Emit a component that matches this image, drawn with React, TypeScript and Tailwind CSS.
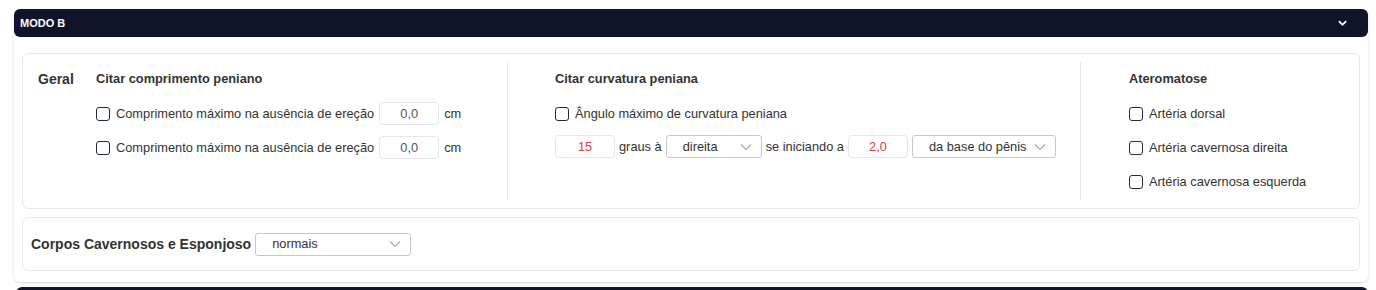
import React from 'react';

function Check({ label }: { label: string }) {
  return (
    <label className="flex items-center gap-[6px] text-[12.8px] leading-[17px] text-[#333]">
      <span className="w-[14px] h-[14px] rounded-[3px] border border-[#1f2a44] bg-white shrink-0" />
      <span>{label}</span>
    </label>
  );
}

function Chevron({ className }: { className?: string }) {
  return (
    <svg viewBox="0 0 12 8" className={className} fill="none" stroke="currentColor" strokeWidth="1.2">
      <path d="M1 1.5 6 6.5 11 1.5" />
    </svg>
  );
}

function NumInput({ value, red }: { value: string; red?: boolean }) {
  return (
    <div
      className={`w-[60px] h-[23px] rounded-[4px] border border-[#e3e6ea] flex items-center justify-center text-[12.8px] ${
        red ? 'text-[#e53935]' : 'text-[#555]'
      }`}
    >
      {value}
    </div>
  );
}

function Select({ value, width }: { value: string; width: string }) {
  return (
    <div className={`${width} h-[23px] rounded-[3px] border border-[#c8c8c8] flex items-center justify-between pl-4 pr-[9px] text-[12.8px] text-[#333]`}>
      <span>{value}</span>
      <Chevron className="w-[12px] h-[8px] text-[#aaa]" />
    </div>
  );
}

export default function App() {
  return (
    <div className="min-h-screen bg-white pt-[9px] font-['Liberation_Sans',Arial,sans-serif] text-[#333]">
      <div className="ml-[14px] mr-[8px] rounded-[6px] bg-white shadow-[0_1px_3px_rgba(0,0,0,0.15)] pb-[11px]">
        <div className="h-[28px] rounded-[6px] bg-[#11132b] flex items-center justify-between pl-[6px] pr-[21px]">
          <span className="text-[11px] font-bold text-white">MODO B</span>
          <svg viewBox="0 0 10 6" className="w-[9px] h-[6px] text-white" fill="none" stroke="currentColor" strokeWidth="2">
            <path d="M1 1 5 5 9 1" />
          </svg>
        </div>

        <div className="mx-[8px] mt-[16px] rounded-[6px] border border-[#e5e8ec] flex py-[8px] pl-[15px]">
          <div className="w-[58px] pt-[9px] text-[14px] font-bold leading-[17px]">Geral</div>

          <div className="w-[411px] pt-[9px]">
            <div className="text-[12.8px] font-bold leading-[15px]">Citar comprimento peniano</div>
            <div className="mt-[16px] flex flex-col gap-[11px]">
              {[0, 1].map((i) => (
                <div key={i} className="flex items-center gap-[5px]">
                  <Check label="Comprimento máximo na ausência de ereção" />
                  <NumInput value="0,0" />
                  <span className="text-[12.8px]">cm</span>
                </div>
              ))}
            </div>
          </div>

          <div className="w-[573px] border-l border-[#e5e8ec] pl-[47px] pt-[9px]">
            <div className="text-[12.8px] font-bold leading-[15px]">Citar curvatura peniana</div>
            <div className="mt-[19px]">
              <Check label="Ângulo máximo de curvatura peniana" />
            </div>
            <div className="mt-[13px] flex items-center gap-[4px] text-[12.8px]">
              <NumInput value="15" red />
              <span>graus à</span>
              <Select value="direita" width="w-[96px]" />
              <span>se iniciando a</span>
              <NumInput value="2,0" red />
              <Select value="da base do pênis" width="w-[144px]" />
            </div>
          </div>

          <div className="flex-1 border-l border-[#e5e8ec] pl-[48px] pt-[9px] pb-[10px]">
            <div className="text-[12.8px] font-bold leading-[15px]">Ateromatose</div>
            <div className="mt-[19px] flex flex-col gap-[17px]">
              <Check label="Artéria dorsal" />
              <Check label="Artéria cavernosa direita" />
              <Check label="Artéria cavernosa esquerda" />
            </div>
          </div>
        </div>

        <div className="mx-[8px] mt-[8px] rounded-[6px] border border-[#e5e8ec] h-[54px] flex items-center pl-[8px] gap-[4px]">
          <span className="text-[14px] font-bold">Corpos Cavernosos e Esponjoso</span>
          <Select value="normais" width="w-[156px]" />
        </div>
      </div>
      <div className="mt-[5px] ml-[16px] mr-[8px] h-[10px] rounded-t-[6px] bg-[#11132b]" />
    </div>
  );
}
